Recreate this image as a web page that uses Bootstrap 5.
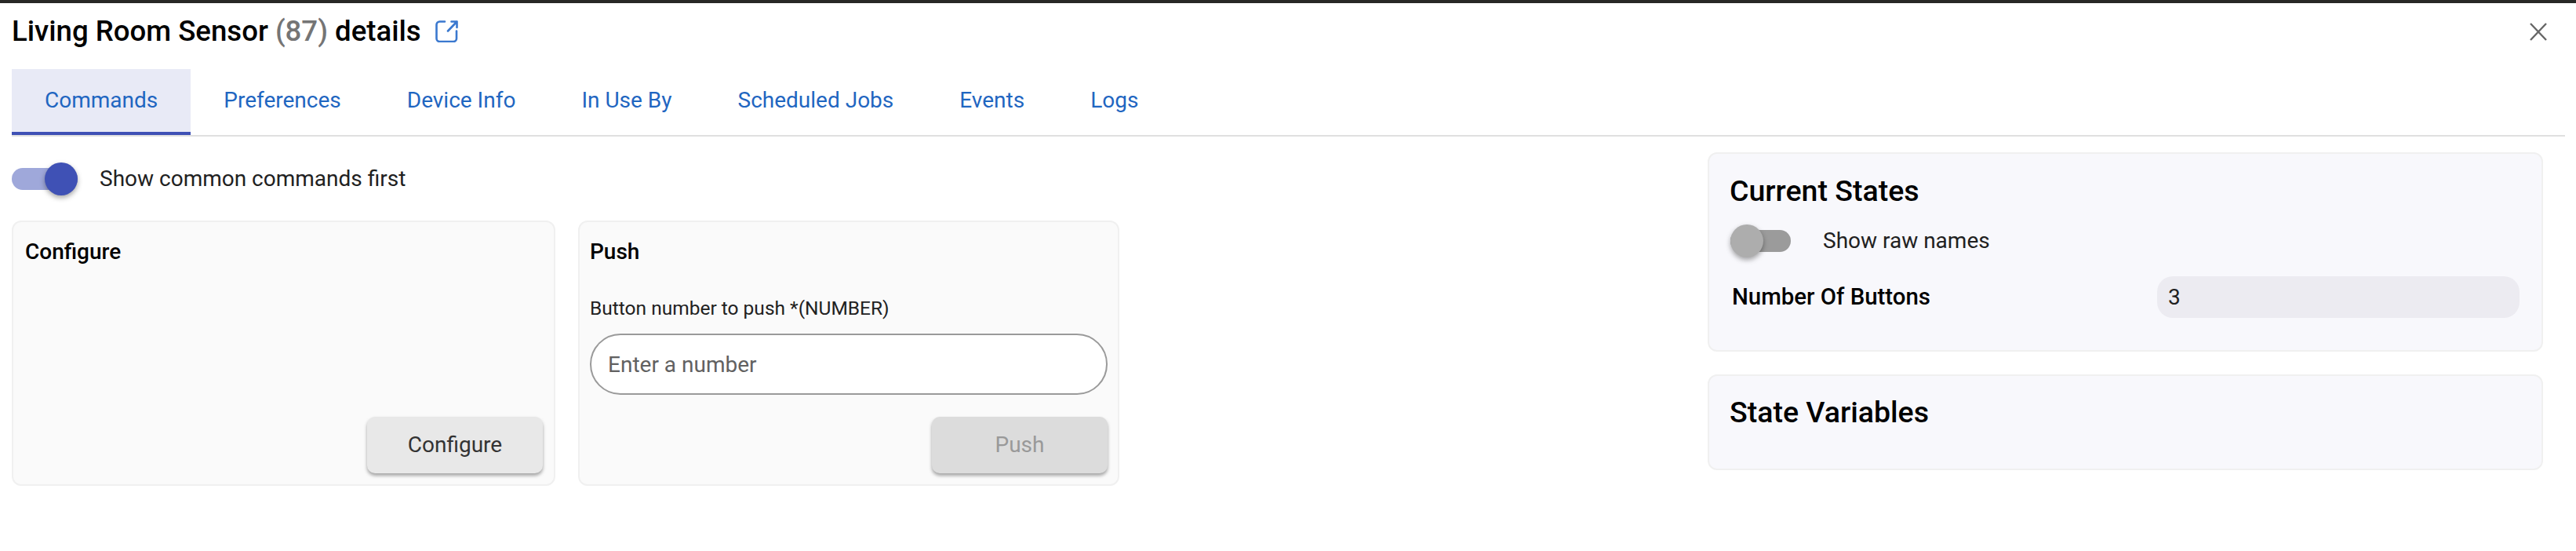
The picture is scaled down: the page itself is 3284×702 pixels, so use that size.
<!DOCTYPE html>
<html lang="en">
<head>
  <meta charset="UTF-8"/>
  <meta name="viewport" content="width=device-width, initial-scale=1.0"/>
  <title>Living Room Sensor details</title>
  <link href="https://cdn.jsdelivr.net/npm/bootstrap@5.3.0/dist/css/bootstrap.min.css" rel="stylesheet"/>
  <style>
    body {
      font-family: Roboto, "Liberation Sans", sans-serif;
      font-size: 28px;
      background: #fff;
      color: #212121;
      border-top: 4px solid #282826;
      overflow: hidden;
    }
    .dlg-head {
      height: 84px;
      padding: 0 37px 12px 15px;
    }
    .dlg-title {
      font-size: 36.6px;
      font-weight: 500;
      color: #000;
      margin: 0;
      line-height: 68px;
    }
    .dlg-id { color: #757575; }
    .dlg-link { margin-left: 18px; color: #3a78cf; line-height: 0; }
    .dlg-close { width: 22px; height: 23px; color: #666; margin-top: 0; }
    .tab-strip {
      margin: 0 14px 0 15px;
      border-bottom: 2px solid #e0e0e0;
      height: 86px;
      flex-wrap: nowrap;
    }
    .tab-strip .nav-link {
      height: 84px;
      padding: 0 42px;
      line-height: 80px;
      color: #1f66c1;
      border-radius: 0;
      border-bottom: 4px solid transparent;
    }
    .tab-strip .nav-link.active {
      background: #e8eaf6;
      border-bottom-color: #3f51b5;
    }
    .pane-main {
      padding: 0 42px 0 15px;
    }
    .pane-left { width: 2162px; flex: none; }
    .pane-right { flex: 1; padding-top: 20px; }
    .switch-row { height: 107px; }
    .switch-box.form-check-input {
      position: relative;
      width: 84px;
      height: 28px;
      margin: 0 28px 0 0;
      background: #9fa8da;
      border: 0;
      border-radius: 14px;
      flex: none;
    }
    .switch-box.form-check-input::before {
      content: "";
      position: absolute;
      right: 0;
      top: -7px;
      width: 42px;
      height: 42px;
      border-radius: 50%;
      background: #3f51b5;
      box-shadow: 0 3px 6px rgba(0,0,0,.35);
    }
    .switch-box.switch-off.form-check-input {
      width: 77px;
      background: #9b9b9b;
      margin-right: 41px;
    }
    .switch-box.switch-off.form-check-input::before {
      left: 0;
      right: auto;
      background: #adadad;
    }
    .cmd-grid { gap: 29px; }
    .cmd-tile {
      width: 693px;
      height: 338px;
      background: #fafafa;
      border: 2px solid #f0f0f0;
      border-radius: 12px;
      padding: 0 14px 14px 15px;
    }
    .cmd-tile + .cmd-tile { width: 690px; padding: 0 13px 14px 13px; }
    .cmd-name {
      font-size: 28px;
      font-weight: 500;
      color: #000;
      line-height: 36px;
      margin: 20px 0 0;
    }
    .cmd-label { line-height: 36px; font-size: 24.5px; margin: 36px 0 14px; color: #212121; display: block; }
    .cmd-input.form-control {
      height: 78px;
      border: 2px solid #9a9a9a;
      border-radius: 39px;
      padding: 0 21px;
      font-size: 28px;
      background: #fff;
    }
    .cmd-input::placeholder { color: #616161; opacity: 1; }
    .cmd-btn.btn {
      width: 224px;
      height: 72px;
      background: #e8e8e8;
      border: 0;
      border-radius: 10px;
      font-size: 28px;
      color: #333;
      box-shadow: 0 3px 4px rgba(0,0,0,.35);
    }
    .cmd-btn.btn:disabled {
      background: #dcdcdc;
      color: #999;
      opacity: 1;
    }
    .state-tile {
      background: #f8f8fc;
      border: 2px solid #f0f0f0;
      border-radius: 12px;
      padding: 0 27px;
    }
    .state-one { height: 254px; margin-bottom: 29px; }
    .state-two { height: 122px; }
    .state-title {
      font-size: 37.5px;
      font-weight: 500;
      color: #000;
      line-height: 44px;
      margin: 25px 0 0 -1px;
    }
    .state-two .state-title { margin-top: 24px; }
    .raw-row { height: 42px; margin-top: 21px; }
    .num-row { margin-top: 24px; }
    .num-name { font-size: 29.4px; font-weight: 500; color: #000; width: 544px; padding-left: 2px; flex: none; }
    .num-value {
      width: 462px;
      height: 53px;
      line-height: 53px;
      background: #ecebf1;
      border-radius: 20px;
      padding-left: 14px;
    }
  </style>
</head>
<body>

<div class="dlg-head d-flex align-items-center justify-content-between">
  <div class="d-flex align-items-center">
    <h1 class="dlg-title">Living Room Sensor <span class="dlg-id">(87)</span> details</h1>
    <a class="dlg-link" href="#">
      <svg width="29" height="28" viewBox="0 0 29 28" fill="none" stroke="currentColor" stroke-width="2.6" stroke-linecap="round" stroke-linejoin="round">
        <path d="M12 1.5H5.5a4 4 0 0 0-4 4V23a4 4 0 0 0 4 4H23a4 4 0 0 0 4-4V13.5"/>
        <path d="M16 13.5 27.5 1.5M20.5 1.5h7V9"/>
      </svg>
    </a>
  </div>
  <svg class="dlg-close" viewBox="0 0 22 23" fill="none" stroke="currentColor" stroke-width="2.4">
    <path d="M1 1 21 22M21 1 1 22"/>
  </svg>
</div>

<ul class="nav tab-strip">
  <li class="nav-item"><a class="nav-link active" href="#">Commands</a></li>
  <li class="nav-item"><a class="nav-link" href="#">Preferences</a></li>
  <li class="nav-item"><a class="nav-link" href="#">Device Info</a></li>
  <li class="nav-item"><a class="nav-link" href="#">In Use By</a></li>
  <li class="nav-item"><a class="nav-link" href="#">Scheduled Jobs</a></li>
  <li class="nav-item"><a class="nav-link" href="#">Events</a></li>
  <li class="nav-item"><a class="nav-link" href="#">Logs</a></li>
</ul>

<div class="pane-main d-flex">
  <div class="pane-left">
    <div class="switch-row d-flex align-items-center">
      <input class="form-check-input switch-box" type="checkbox" checked/>
      <span>Show common commands first</span>
    </div>
    <div class="cmd-grid d-flex">
      <div class="cmd-tile d-flex flex-column">
        <h2 class="cmd-name">Configure</h2>
        <div class="mt-auto d-flex justify-content-end">
          <button class="btn cmd-btn">Configure</button>
        </div>
      </div>
      <div class="cmd-tile d-flex flex-column">
        <h2 class="cmd-name">Push</h2>
        <label class="cmd-label">Button number to push *(NUMBER)</label>
        <input class="form-control cmd-input" type="text" placeholder="Enter a number"/>
        <div class="mt-auto d-flex justify-content-end">
          <button class="btn cmd-btn" disabled>Push</button>
        </div>
      </div>
    </div>
  </div>

  <div class="pane-right">
    <div class="state-tile state-one">
      <h2 class="state-title">Current States</h2>
      <div class="raw-row d-flex align-items-center">
        <input class="form-check-input switch-box switch-off" type="checkbox"/>
        <span>Show raw names</span>
      </div>
      <div class="num-row d-flex align-items-center">
        <span class="num-name">Number Of Buttons</span>
        <span class="num-value">3</span>
      </div>
    </div>
    <div class="state-tile state-two">
      <h2 class="state-title">State Variables</h2>
    </div>
  </div>
</div>

</body>
</html>
